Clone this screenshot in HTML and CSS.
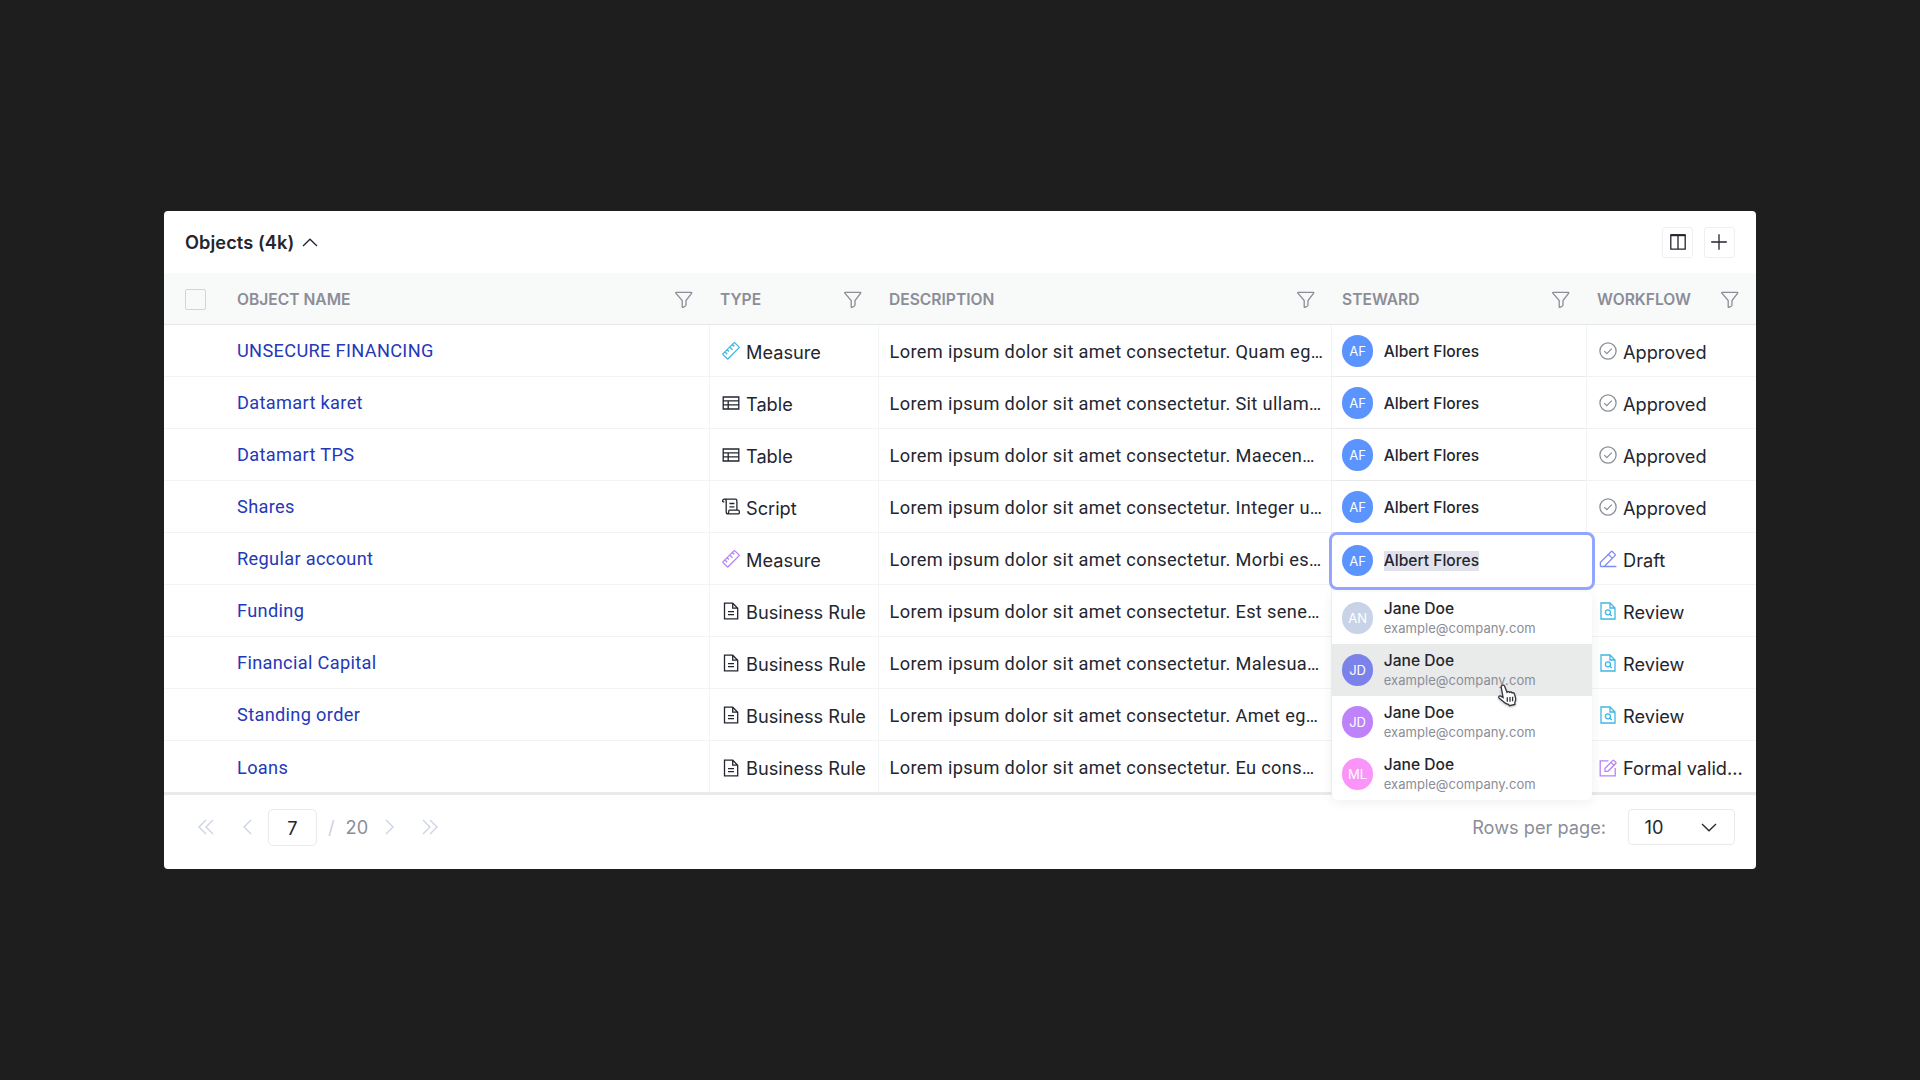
FILE: index.html
```html
<!DOCTYPE html>
<html lang="en">
<head>
  <meta charset="UTF-8" />
  <meta name="viewport" content="width=device-width, initial-scale=1.0"/>
  <title>Objects</title>
  <link rel="stylesheet" href="styles.css">
</head>
<body>

<svg class="sprite" aria-hidden="true">
  <symbol id="filter" viewBox="0 0 18 18"><path d="M1 1.4h15.4c.4 0 .5.4.3.7L11 9.5v4.6c0 .4-.2.7-.6.9l-2.3 1.3c-.5.2-.9 0-.9-.5V9.5L.8 2.1c-.2-.3-.1-.7.2-.7z"/></symbol>
  <symbol id="ruler" viewBox="0 0 18 18"><path d="M1.1 11.6 11.9.9q.5-.5 1 0l4 4q.5.5 0 1L6.2 16.8q-.5.5-1 0l-4.1-4.2q-.5-.5 0-1zM5.2 7.7l1.8 1.8M7.9 5.1l2.6 2.6M10.5 2.5l1.8 1.8M3 10l2.2 2.2"/></symbol>
  <symbol id="table" viewBox="0 0 18 18"><path d="M1.2 3h15.6v12H1.2zM1.2 6.8h15.6M1.2 10.9h15.6M6.2 6.8V15"/></symbol>
  <symbol id="script" viewBox="0 0 18 18"><path d="M.7 3.9C.3 2.5 1 1.2 2.4 1.2h10.9c1 0 1.6.7 1.6 1.7v8.9M2.4 1.2c1.1 0 1.8.7 1.8 1.9v10.6c0 1.4.7 2.2 2 2.2h9.6c1.3 0 1.8-.7 1.5-2.3 0-1.1-.3-1.4-1.2-1.4H7.4c-.7 0-.7.5-.7 1.6 0 1.2-.2 1.9-1 2.1M.7 3.9h1.7M7.4 5.5h5M7.4 8.8h5"/></symbol>
  <symbol id="doc" viewBox="0 0 18 18"><path d="M2.5 1.2h8.2l5 5v10.6H2.5zM10.7 1.2v5h5M6 9.6h6M6 12.7h6"/></symbol>
  <symbol id="check" viewBox="0 0 18 18"><circle cx="9" cy="9" r="8.1"/><path d="m5.3 9.1 2.5 2.5 5-5"/></symbol>
  <symbol id="draft" viewBox="0 0 18 18"><path d="M1.4 16.5v-4.2L12.3 1.5q.5-.5 1 0l2.9 2.9q.5.5 0 1L5.3 16.5M9.4 4.4l4 4M1.4 16.5h16"/></symbol>
  <symbol id="review" viewBox="0 0 18 18"><path d="M2 1h9l5 5v11H2zM11 1v5h5M12.8 14l-2.2-2"/><circle cx="8.9" cy="10.3" r="2.5"/></symbol>
  <symbol id="formal" viewBox="0 0 18 18"><path d="M9.5 1.8H1.2v15h15V9M6 12.3V9.2L14 1.4q.4-.4.9 0l2 2q.5.4 0 .9L9 12.3zM12 3.4l3 3"/></symbol>
</svg>

<div class="card">
  <div class="toolbar">
    <span class="title">Objects (4k)</span>
    <svg class="caret" viewBox="0 0 16 9"><path d="m1 8 7-6.8L15 8"/></svg>
    <button class="icon-btn first"><svg viewBox="0 0 18 18"><path d="M1.8 1.8h14.4v14.4H1.8zM9 1.8v14.4"/><path class="thick" d="M1.8 2.2h14.4"/></svg></button>
    <button class="icon-btn"><svg viewBox="0 0 18 18"><path d="M9 1.2v15.6M1.2 9h15.6"/></svg></button>
  </div>

  <div class="row head">
    <div class="cell"><span class="checkbox"></span></div>
    <div class="cell">OBJECT NAME <svg class="filter"><use href="#filter"/></svg></div>
    <div class="cell">TYPE <svg class="filter"><use href="#filter"/></svg></div>
    <div class="cell">DESCRIPTION <svg class="filter"><use href="#filter"/></svg></div>
    <div class="cell">STEWARD <svg class="filter"><use href="#filter"/></svg></div>
    <div class="cell">WORKFLOW <svg class="filter"><use href="#filter"/></svg></div>
  </div>

  <div class="row">
    <div class="cell"></div>
    <div class="cell name"><a>UNSECURE FINANCING</a></div>
    <div class="cell type"><svg class="icon cyan"><use href="#ruler"/></svg><span>Measure</span></div>
    <div class="cell desc">Lorem ipsum dolor sit amet consectetur. Quam eg…</div>
    <div class="cell steward"><span class="avatar">AF</span><span>Albert Flores</span></div>
    <div class="cell type"><svg class="icon gray"><use href="#check"/></svg><span>Approved</span></div>
  </div>
  <div class="row">
    <div class="cell"></div>
    <div class="cell name"><a>Datamart karet</a></div>
    <div class="cell type"><svg class="icon"><use href="#table"/></svg><span>Table</span></div>
    <div class="cell desc">Lorem ipsum dolor sit amet consectetur. Sit ullam…</div>
    <div class="cell steward"><span class="avatar">AF</span><span>Albert Flores</span></div>
    <div class="cell type"><svg class="icon gray"><use href="#check"/></svg><span>Approved</span></div>
  </div>
  <div class="row">
    <div class="cell"></div>
    <div class="cell name"><a>Datamart TPS</a></div>
    <div class="cell type"><svg class="icon"><use href="#table"/></svg><span>Table</span></div>
    <div class="cell desc">Lorem ipsum dolor sit amet consectetur. Maecen…</div>
    <div class="cell steward"><span class="avatar">AF</span><span>Albert Flores</span></div>
    <div class="cell type"><svg class="icon gray"><use href="#check"/></svg><span>Approved</span></div>
  </div>
  <div class="row">
    <div class="cell"></div>
    <div class="cell name"><a>Shares</a></div>
    <div class="cell type"><svg class="icon"><use href="#script"/></svg><span>Script</span></div>
    <div class="cell desc">Lorem ipsum dolor sit amet consectetur. Integer u…</div>
    <div class="cell steward"><span class="avatar">AF</span><span>Albert Flores</span></div>
    <div class="cell type"><svg class="icon gray"><use href="#check"/></svg><span>Approved</span></div>
  </div>
  <div class="row">
    <div class="cell"></div>
    <div class="cell name"><a>Regular account</a></div>
    <div class="cell type"><svg class="icon purple"><use href="#ruler"/></svg><span>Measure</span></div>
    <div class="cell desc">Lorem ipsum dolor sit amet consectetur. Morbi es…</div>
    <div class="cell steward">
      <div class="editor"><span class="avatar">AF</span><span class="selected">Albert Flores</span></div>
      <div class="menu">
        <div class="option"><span class="avatar slate">AN</span><div><p class="person">Jane Doe</p><p class="email">example@company.com</p></div></div>
        <div class="option hover"><span class="avatar indigo">JD</span><div><p class="person">Jane Doe</p><p class="email">example@company.com</p></div></div>
        <div class="option"><span class="avatar violet">JD</span><div><p class="person">Jane Doe</p><p class="email">example@company.com</p></div></div>
        <div class="option"><span class="avatar pink">ML</span><div><p class="person">Jane Doe</p><p class="email">example@company.com</p></div></div>
        <svg class="cursor" viewBox="0 0 21 23"><path d="M5 1.5c1-.7 2.1-.3 2.6.8l2.4 6c.8-.8 1.9-.8 2.5.1.9-.7 2.1-.5 2.6.5 1-.4 2 .1 2.3 1.1l1.2 4c.5 1.9 0 3.400-.8 4.700l.1 1.700-5.300 1.300-1-1.200c-2.500-.3-3.700-1.500-5.300-3l-4-3.200c-1.400-1.300-.3-2.800 1.500-2.200l2.300 1.300L4.300 3.600c-.3-.9-.1-1.600.7-2.100z"/><path d="M10.3 13.3v4.500M13 13v4.700M15.600 12.800v4.500"/></svg>
      </div>
    </div>
    <div class="cell type"><svg class="icon blue"><use href="#draft"/></svg><span>Draft</span></div>
  </div>
  <div class="row">
    <div class="cell"></div>
    <div class="cell name"><a>Funding</a></div>
    <div class="cell type"><svg class="icon"><use href="#doc"/></svg><span>Business Rule</span></div>
    <div class="cell desc">Lorem ipsum dolor sit amet consectetur. Est sene…</div>
    <div class="cell steward"></div>
    <div class="cell type"><svg class="icon cyan"><use href="#review"/></svg><span>Review</span></div>
  </div>
  <div class="row">
    <div class="cell"></div>
    <div class="cell name"><a>Financial Capital</a></div>
    <div class="cell type"><svg class="icon"><use href="#doc"/></svg><span>Business Rule</span></div>
    <div class="cell desc">Lorem ipsum dolor sit amet consectetur. Malesua…</div>
    <div class="cell steward"></div>
    <div class="cell type"><svg class="icon cyan"><use href="#review"/></svg><span>Review</span></div>
  </div>
  <div class="row">
    <div class="cell"></div>
    <div class="cell name"><a>Standing order</a></div>
    <div class="cell type"><svg class="icon"><use href="#doc"/></svg><span>Business Rule</span></div>
    <div class="cell desc">Lorem ipsum dolor sit amet consectetur. Amet eg…</div>
    <div class="cell steward"></div>
    <div class="cell type"><svg class="icon cyan"><use href="#review"/></svg><span>Review</span></div>
  </div>
  <div class="row last">
    <div class="cell"></div>
    <div class="cell name"><a>Loans</a></div>
    <div class="cell type"><svg class="icon"><use href="#doc"/></svg><span>Business Rule</span></div>
    <div class="cell desc">Lorem ipsum dolor sit amet consectetur. Eu cons…</div>
    <div class="cell steward"></div>
    <div class="cell type"><svg class="icon purple"><use href="#formal"/></svg><span>Formal valid...</span></div>
  </div>

  <div class="footer">
    <svg class="nav double" viewBox="0 0 16 16"><path d="M8 1 1 8l7 7M15 1 8 8l7 7"/></svg>
    <svg class="nav prev" viewBox="0 0 9 16"><path d="M8 1 1 8l7 7"/></svg>
    <span class="page">7</span>
    <span class="slash">/</span>
    <span class="total">20</span>
    <svg class="nav next" viewBox="0 0 9 16"><path d="m1 1 7 7-7 7"/></svg>
    <svg class="nav double end" viewBox="0 0 16 16"><path d="m1 1 7 7-7 7M8 1l7 7-7 7"/></svg>
    <span class="per-page">Rows per page:</span>
    <div class="select">10 <svg class="caret" viewBox="0 0 16 9"><path d="m1 1 7 6.8L15 1"/></svg></div>
  </div>
</div>

</body>
</html>
```

FILE: styles.css
```css
html, body {
  margin: 0;
  padding: 0;
  background: #1e1e1e;
}

body {
  height: 1080px;
  overflow: hidden;
  font-family: Inter, sans-serif;
  font-size: 18.2px;
  color: #23262f;
}

p {
  margin: 0;
}

svg {
  fill: none;
  stroke: currentColor;
  stroke-width: 1.3;
  flex-shrink: 0;
}

.sprite {
  position: absolute;
  width: 0;
  height: 0;
}

.card {
  display: flow-root;
  width: 1591.5px;
  height: 657.5px;
  margin: 211px 0 0 164px;
  background: white;
  border-radius: 4px;
}

.toolbar {
  display: flex;
  align-items: center;
  height: 62px;
  padding: 0 21px;
  box-sizing: border-box;
}

.title {
  font-weight: 600;
  letter-spacing: 0.08px;
}

.caret {
  width: 16px;
  height: 9px;
  margin-left: 8px;
}

.icon-btn {
  display: flex;
  align-items: center;
  justify-content: center;
  width: 31px;
  height: 31px;
  margin-left: 10.5px;
  padding: 0;
  background: white;
  border: 1px solid #eeeff0;
  border-radius: 3px;
  color: #23262f;
}

.icon-btn.first {
  margin-left: auto;
}

.icon-btn svg {
  width: 18px;
  height: 18px;
}

.icon-btn .thick {
  stroke-width: 2;
}

.row {
  display: grid;
  grid-template-columns: 62px 483px 169px 453px 255px 1fr;
  height: 52px;
}

.cell {
  position: relative;
  display: flex;
  align-items: center;
  box-sizing: border-box;
  padding: 1px 0 0 11px;
  border-bottom: 1px solid #f2f3f4;
  white-space: nowrap;
}

.row:not(.head) .cell:nth-child(n+3) {
  border-left: 1px solid #f2f3f4;
  padding-left: 10px;
}

.row:not(.head) .cell.type {
  padding-left: 11.5px;
}

.row:not(.head) .cell.desc {
  padding-left: 10.5px;
}

.last .cell {
  border-bottom: none;
}

/* header */
.head {
  background: #f8f9f9;
  color: #8b8d98;
  font-size: 15.6px;
  font-weight: 600;
}

.head .cell {
  justify-content: space-between;
  padding-top: 2px;
  padding-right: 16px;
  border-bottom-color: #e6e8e8;
}

.head .cell:last-child {
  padding-right: 17px;
}

.head .cell:first-child {
  padding-left: 20.5px;
}

.checkbox {
  width: 19px;
  height: 19px;
  border: 1px solid #cfd3e4;
  border-radius: 2px;
}

.filter {
  width: 18px;
  height: 18px;
}

/* cells */
.name, .desc {
  font-family: Roboto, sans-serif;
  letter-spacing: 0.36px;
}

.name {
  padding-top: 0;
  letter-spacing: 0.33px;
}

.name a {
  color: #2438b8;
}

.type span {
  margin-left: 6.5px;
  padding-top: 1px;
}

.icon {
  width: 18px;
  height: 18px;
}

.cyan { color: #3fb6e6; }
.purple { color: #b583f5; }
.blue { color: #7c8cf5; }
.gray { color: #8b9098; }

.steward {
  font-size: 15.6px;
  font-weight: 500;
  border-bottom-color: #e9eaec;
}

.avatar {
  display: flex;
  align-items: center;
  justify-content: center;
  flex-shrink: 0;
  width: 31.2px;
  height: 31.2px;
  margin-right: 10.5px;
  border-radius: 50%;
  background: #5b93ff;
  color: white;
  font-size: 13px;
  font-weight: 400;
}

.slate { background: #c8d3e8; }
.indigo { background: #7b83eb; }
.violet { background: #be83fa; }
.pink { background: #fa94f8; }

/* open steward editor */
.editor {
  position: absolute;
  z-index: 2;
  top: -1.5px;
  left: -3px;
  display: flex;
  align-items: center;
  box-sizing: border-box;
  width: 266px;
  height: 58.5px;
  padding-left: 10px;
  background: white;
  border: 3px solid #94a5ff;
  border-radius: 8px;
}

.selected {
  background: #e2e2ec;
  line-height: 20px;
}

.menu {
  position: absolute;
  z-index: 1;
  top: 59px;
  left: 0;
  width: 260px;
  background: white;
  border-radius: 6px;
  box-shadow: 0 2px 12px rgba(30, 50, 50, 0.08);
}

.option {
  display: flex;
  align-items: center;
  height: 52px;
  padding-left: 10px;
}

.option.hover {
  background: #e9eaea;
}

.person {
  padding-top: 1px;
  line-height: 20px;
}

.email {
  font-size: 13px;
  font-weight: 400;
  line-height: 19px;
  letter-spacing: 0.06px;
  color: #8b8d98;
}

.cursor {
  position: absolute;
  top: 92px;
  left: 165px;
  width: 21px;
  height: 23px;
  fill: white;
  color: #333540;
  filter: drop-shadow(0 1px 1px rgba(0, 0, 0, 0.25));
}

/* footer */
.footer {
  display: flex;
  align-items: center;
  height: 67px;
  margin-top: -1px;
  padding: 0 21px 0 34px;
  box-sizing: border-box;
  border-top: 3px solid #e9eaea;
  color: #8b8d98;
}

.nav {
  height: 16px;
  color: #cbd2e6;
}

.double { width: 16px; }
.prev { width: 9px; margin-left: 29px; }
.next { width: 9px; margin-left: 16.5px; }
.end { margin-left: 28.5px; }

.page {
  width: 47px;
  height: 35px;
  margin-left: 16px;
  border: 1px solid #e9eaec;
  border-radius: 5px;
  line-height: 36px;
  text-align: center;
  color: #23262f;
}

.slash {
  margin-left: 11px;
  color: #cbd2e6;
}

.total {
  margin-left: 11px;
}

.per-page {
  margin-left: auto;
}

.select {
  display: flex;
  align-items: center;
  justify-content: space-between;
  box-sizing: border-box;
  width: 106.5px;
  height: 36.5px;
  margin-left: 22px;
  padding: 0 17px 0 15.5px;
  border: 1px solid #e9eaec;
  border-radius: 4px;
  color: #23262f;
}
```
